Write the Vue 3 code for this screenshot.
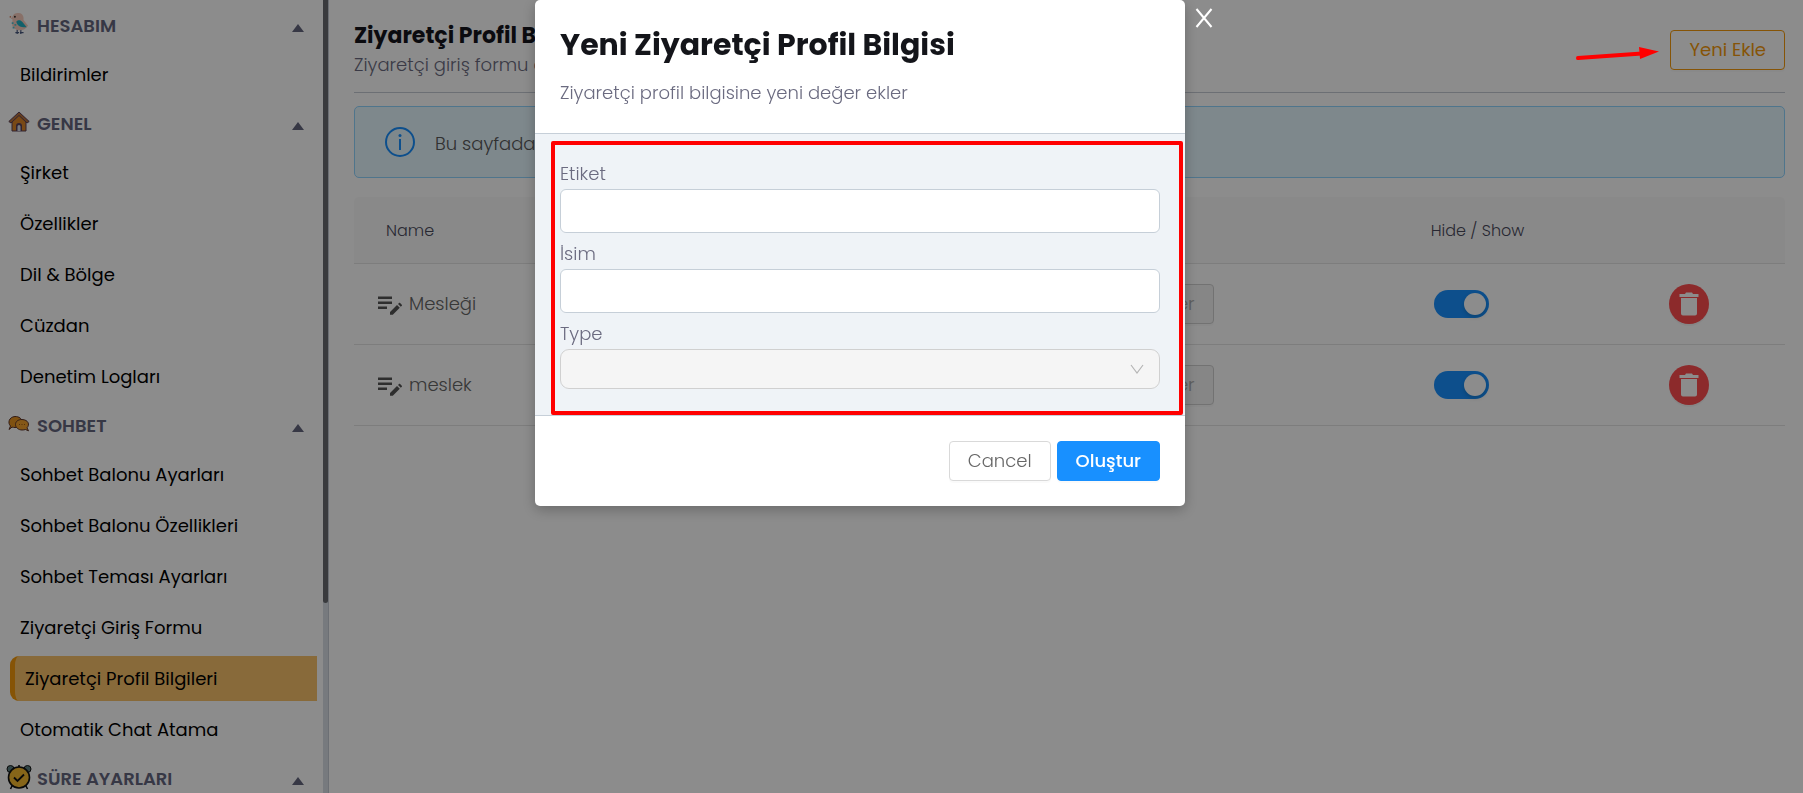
<template>
  <div class="page">
    <aside class="sidebar">
      <nav class="sidebar-nav">
        <section v-for="group in groups" :key="group.title" class="group">
          <button type="button" class="group-header">
            <span class="group-icon" aria-hidden="true">
              <svg v-if="group.icon === 'bird'" width="20" height="24" viewBox="0 0 22 26">
                <path d="M9 19v5M13 19v5M7 22.500h4M12 22.500h4" stroke="#4a5a80" stroke-width="1.300" fill="none" />
                <path d="M2 7 4 4.500C5 1.500 8 .5 11 1c4 .6 5.500 4 5 7.500l5 6.500-3 3c-2 2-8 3-12 0C2.500 15.500 3.500 11 4 8z" fill="#f7cdbd" />
                <path d="M2 6 0 5.200 2.500 4z" fill="#d8744f" />
                <path d="M8 10.500c2-2.500 5-2 6.500 0l5 6c-5 .5-10-.5-11.500-6z" fill="#22b1c4" />
                <path d="M3 11h2v2H3zM6 13h2v2H6zM4 16h2v2H4z" fill="#54c4d4" />
                <circle cx="6.500" cy="5" r="1" fill="#222" />
              </svg>
              <svg v-else-if="group.icon === 'house'" width="22" height="22" viewBox="0 0 22 22">
                <path d="M4 9v11h14V9l-7-6z" fill="#dd8629" stroke="#59405a" />
                <path d="M11 1 .8 10.500 3 12l8-7.500 8 7.500 2.200-1.500z" fill="#b7713b" stroke="#59405a" />
                <path d="M8 20v-5a3 3 0 0 1 6 0v5z" fill="#59405a" />
                <path d="M9.500 20v-4.500a1.500 1.500 0 0 1 3 0V20z" fill="#d8dbe6" />
              </svg>
              <svg v-else-if="group.icon === 'chat'" width="22" height="20" viewBox="0 0 22 18">
                <path d="M1 14.500 2.500 11C-.5 8 .8 2 7 1.500c4 0 7 2 7 5.500s-3 5.500-7 5.500c-1 0-2-.2-3-.4z" fill="#e89420" stroke="#59322a" />
                <path d="m20.500 15.800-1.500-3c3-3 1.500-8-5-8.300-4 0-6.500 2-6.500 5s3 5.500 6.500 5.500c1.500 0 2.500-.2 3.500-.5z" fill="#f3a02c" stroke="#59322a" />
                <path d="M11 9.500h1M13.500 9.500h1M16 9.500h1" stroke="#9b5b16" />
              </svg>
              <svg v-else width="26" height="26" viewBox="0 0 26 26">
                <circle cx="4.500" cy="5" r="3.500" fill="#5b7f80" stroke="#111" />
                <circle cx="21.500" cy="5" r="3.500" fill="#5b7f80" stroke="#111" />
                <path d="m6.500 21-2 4M19.500 21l2 4M13 1v2" stroke="#111" stroke-width="1.600" />
                <circle cx="13" cy="13.500" r="10.500" fill="#f5b92e" stroke="#111" stroke-width="1.600" />
                <path d="m8 13.500 3.500 3.500 6.500-6.500" fill="none" stroke="#111" stroke-width="1.800" />
              </svg>
            </span>
            <span class="group-title">{{ group.title }}</span>
            <span class="caret" aria-hidden="true"></span>
          </button>
          <a
            v-for="item in group.items"
            :key="item"
            href="#"
            class="nav-item"
            :class="{ active: item === activeItem }"
          >{{ item }}</a>
        </section>
      </nav>
      <div class="scroll-track"><div class="scroll-thumb"></div></div>
    </aside>

    <main class="content">
      <header class="page-header">
        <div>
          <h1 class="page-title">Ziyaretçi Profil Bilgileri</h1>
          <p class="page-subtitle">Ziyaretçi giriş formu alanları</p>
        </div>
        <button type="button" class="btn btn-add">Yeni Ekle</button>
      </header>

      <div class="alert">
        <svg width="32" height="32" viewBox="0 0 32 32" fill="none" stroke="#1890ff" aria-hidden="true">
          <circle cx="16" cy="16" r="14" stroke-width="2" />
          <path d="M16 13v11" stroke-width="2" />
          <circle cx="16" cy="9.500" r="1.500" fill="#1890ff" stroke="none" />
        </svg>
        <span class="alert-text">Bu sayfada</span>
      </div>

      <table class="table">
        <colgroup>
          <col class="col-name" />
          <col class="col-values" />
          <col class="col-toggle" />
          <col class="col-delete" />
        </colgroup>
        <thead>
          <tr>
            <th>Name</th>
            <th></th>
            <th>Hide / Show</th>
            <th></th>
          </tr>
        </thead>
        <tbody>
          <tr v-for="row in rows" :key="row.name">
            <td>
              <span class="name-cell">
                <svg width="24" height="22" viewBox="0 0 24 22" fill="#555" aria-hidden="true">
                  <path d="M0 3.500h14V6H0zM0 8.500h14V11H0zM0 13.500h9V16H0z" />
                  <path d="m12 19 7-7 2.800 2.800-7 7H12zM20 11l1-1c.3-.3.800-.3 1.100 0l1.700 1.700c.3.3.3.800 0 1.100l-1 1z" />
                </svg>
                {{ row.name }}
              </span>
            </td>
            <td class="values-cell"><button type="button" class="btn btn-values" disabled>Değerler</button></td>
            <td><input v-model="row.visible" type="checkbox" class="switch" :aria-label="row.name" /></td>
            <td>
              <button type="button" class="btn-delete" aria-label="Sil">
                <svg width="20" height="24" viewBox="0 0 20 24" fill="#fff" aria-hidden="true">
                  <path d="M.500 2H6l1-1.500h6L14 2h5.500v3H.500zM2 6h16v15.500a2 2 0 0 1-2 2H4a2 2 0 0 1-2-2z" />
                </svg>
              </button>
            </td>
          </tr>
        </tbody>
      </table>
    </main>

    <div class="overlay">
      <div class="modal" role="dialog" aria-labelledby="modal-title">
        <header class="modal-header">
          <h2 id="modal-title" class="modal-title">Yeni Ziyaretçi Profil Bilgisi</h2>
          <p class="modal-subtitle">Ziyaretçi profil bilgisine yeni değer ekler</p>
        </header>
        <form id="profile-form" class="modal-body" @submit.prevent>
          <label for="field-label">Etiket</label>
          <input id="field-label" v-model="form.label" type="text" class="field" />
          <label for="field-name">İsim</label>
          <input id="field-name" v-model="form.name" type="text" class="field" />
          <label for="field-type">Type</label>
          <div class="select-wrap">
            <select id="field-type" class="field-select" disabled></select>
            <svg class="chevron" width="14" height="10" viewBox="0 0 14 10" fill="none" stroke="#b5b5b5" aria-hidden="true">
              <path d="m1 1 6 8 6-8" stroke-width="1.200" />
            </svg>
          </div>
          <div class="highlight" aria-hidden="true"></div>
        </form>
        <footer class="modal-footer">
          <button type="button" class="btn btn-cancel">Cancel</button>
          <button type="submit" form="profile-form" class="btn btn-primary">Oluştur</button>
        </footer>
      </div>
      <button type="button" class="modal-close" aria-label="Kapat">
        <svg width="18" height="20" viewBox="0 0 18 20" fill="none" stroke="#fff" stroke-width="2">
          <path d="m1.500 1 15 18M16.500 1l-15 18" />
        </svg>
      </button>
    </div>

    <svg class="arrow" width="84" height="16" viewBox="0 0 84 16" aria-hidden="true">
      <path d="m3 11 64-4.500" stroke="#f00" stroke-width="4" stroke-linecap="round" />
      <path d="M64 0 84 4.500 65 12z" fill="#f00" />
    </svg>
  </div>
</template>

<script setup>
import { reactive, ref } from 'vue'

const activeItem = ref('Ziyaretçi Profil Bilgileri')

const groups = [
  { title: 'HESABIM', icon: 'bird', items: ['Bildirimler'] },
  {
    title: 'GENEL',
    icon: 'house',
    items: ['Şirket', 'Özellikler', 'Dil & Bölge', 'Cüzdan', 'Denetim Logları']
  },
  {
    title: 'SOHBET',
    icon: 'chat',
    items: [
      'Sohbet Balonu Ayarları',
      'Sohbet Balonu Özellikleri',
      'Sohbet Teması Ayarları',
      'Ziyaretçi Giriş Formu',
      'Ziyaretçi Profil Bilgileri',
      'Otomatik Chat Atama'
    ]
  },
  { title: 'SÜRE AYARLARI', icon: 'clock', items: [] }
]

const rows = reactive([
  { name: 'Mesleği', visible: true },
  { name: 'meslek', visible: true }
])

const form = reactive({ label: '', name: '' })
</script>

<style>
body {
  overflow: hidden;
}
</style>

<style scoped>
.page {
  display: flex;
  height: 100vh;
  overflow: hidden;
  background: #fff;
  color: #6b6b80;
  font-family: Poppins, Inter, sans-serif;
  font-size: 18px;
  font-weight: 300;
  line-height: 24px;
}

.page *,
.page *::before {
  box-sizing: border-box;
}

button,
input,
select {
  font: inherit;
}

/* Sidebar */
.sidebar {
  display: flex;
  flex: 0 0 329px;
  border-right: 1px solid #c5cad3;
}

.sidebar-nav {
  flex: 1;
  min-width: 0;
  padding: 3px 6px 0 6px;
}

.group {
  display: flex;
  flex-direction: column;
  margin-bottom: 1px;
}

.group-header {
  display: flex;
  align-items: center;
  width: 100%;
  height: 46px;
  padding: 0 13px 0 0;
  border: 0;
  background: none;
  color: #64667f;
  font-weight: 600;
  text-align: left;
}

.group-icon {
  display: flex;
  flex: 0 0 26px;
  justify-content: center;
  margin: 0 5px 4px 0;
}

.group-title {
  flex: 1;
}

.caret {
  margin-top: 4px;
  border: 6px solid transparent;
  border-top: 0;
  border-bottom: 8px solid #64667f;
}

.nav-item {
  height: 45px;
  margin: 3px 0 3px 4px;
  padding: 0 10px;
  color: #000;
  font-weight: 400;
  line-height: 45px;
  text-decoration: none;
}

.nav-item.active {
  border-left: 5px solid #f59a0c;
  border-radius: 9px 0 0 9px;
  background: #f7c16b;
}

.scroll-track {
  width: 5px;
  background: #d9dee6;
}

.scroll-thumb {
  height: 76%;
  border-radius: 0 0 3px 3px;
  background: #686b70;
}

/* Page content */
.content {
  flex: 1;
  min-width: 0;
  padding: 0 18px 0 25px;
}

.page-header {
  display: flex;
  align-items: center;
  justify-content: space-between;
  padding: 22px 0 15px;
  border-bottom: 1px solid #c5cad3;
}

.page-title {
  margin: 0 0 3px;
  color: #15151c;
  font-size: 22px;
  font-weight: 700;
  line-height: 28px;
}

.page-subtitle {
  margin: 0;
}

.btn {
  height: 40px;
  padding: 0 18px;
  border: 1px solid #d9d9d9;
  border-radius: 4px;
  background: #fff;
  color: #666;
  box-shadow: 0 2px 0 rgba(0, 0, 0, 0.02);
}

.btn-add {
  border-color: #f59a0c;
  color: #f59a0c;
  font-weight: 400;
}

.alert {
  display: flex;
  align-items: center;
  gap: 19px;
  height: 72px;
  margin: 13px 0 19px;
  padding: 0 29px;
  border: 1px solid #91d5ff;
  border-radius: 5px;
  background: #e6f7ff;
  color: #595959;
}

.alert-text {
  padding-top: 3px;
}

.table {
  width: 100%;
  border-collapse: separate;
  border-spacing: 0;
  table-layout: fixed;
}

.col-name { width: 30%; }
.col-values { width: 43%; }
.col-toggle { width: 16%; }
.col-delete { width: 11%; }

.table th {
  height: 67px;
  padding: 2px 32px 0;
  border-bottom: 1px solid #e3e3e3;
  background: #fafafa;
  color: #4a4a5c;
  font-size: 16px;
  font-weight: 300;
  text-align: left;
}

.table th:first-child { border-radius: 5px 0 0 0; }
.table th:last-child { border-radius: 0 5px 0 0; }

.table td {
  height: 81px;
  padding: 0 24px;
  border-bottom: 1px solid #e3e3e3;
  color: #666;
}

.table td:nth-child(3) {
  padding-left: 35px;
}

.name-cell {
  display: flex;
  align-items: center;
  gap: 7px;
}

.table .values-cell {
  padding-right: 185px;
  text-align: right;
}

.btn-values {
  border-color: #d0d0d0;
  background: #f5f5f5;
  color: #aaa;
}

.switch {
  display: block;
  width: 55px;
  height: 28px;
  margin: 0;
  padding: 3px;
  border-radius: 14px;
  appearance: none;
  background: #bfbfbf;
}

.switch::before {
  content: '';
  display: block;
  width: 22px;
  height: 22px;
  border-radius: 50%;
  background: #fff;
  box-shadow: 0 2px 4px rgba(0, 35, 11, 0.2);
}

.switch:checked {
  background: #1890ff;
}

.switch:checked::before {
  margin-left: auto;
}

.btn-delete {
  display: flex;
  align-items: center;
  justify-content: center;
  width: 40px;
  height: 40px;
  margin-left: 17px;
  padding: 0;
  border: 0;
  border-radius: 50%;
  background: #ff4d4f;
  box-shadow: 0 2px 0 rgba(0, 0, 0, 0.04);
}

/* Modal */
.overlay {
  position: fixed;
  inset: 0;
  display: flex;
  align-items: flex-start;
  justify-content: center;
  background: rgba(0, 0, 0, 0.45);
}

.modal {
  width: 650px;
  overflow: hidden;
  border-radius: 5px;
  background: #fff;
  box-shadow: 0 4px 14px rgba(0, 0, 0, 0.25);
}

.modal-header {
  padding: 25px 25px 28px;
  border-bottom: 1px solid #c6cfd8;
}

.modal-title {
  margin: 0 0 16px;
  color: #14151a;
  font-size: 30px;
  font-weight: 700;
  line-height: 40px;
}

.modal-subtitle {
  margin: 0;
}

.modal-body {
  position: relative;
  padding: 28px 25px 26px;
  background: #eff3f7;
}

.modal-body label {
  display: block;
  margin-bottom: 3px;
}

.field {
  display: block;
  width: 100%;
  height: 44px;
  margin-bottom: 9px;
  padding: 0 12px;
  border: 1px solid #c6cfd8;
  border-radius: 6px;
  background: #fff;
}

.select-wrap {
  position: relative;
}

.field-select {
  display: block;
  width: 100%;
  height: 40px;
  padding: 0 12px;
  border: 1px solid #d0d0d0;
  border-radius: 9px;
  appearance: none;
  background: #f5f5f5;
  opacity: 1;
}

.chevron {
  position: absolute;
  top: 15px;
  right: 16px;
}

.highlight {
  position: absolute;
  inset: 7px 2px 0 16px;
  border: 4px solid #f00;
  border-radius: 2px;
  pointer-events: none;
}

.modal-footer {
  display: flex;
  justify-content: flex-end;
  gap: 6px;
  padding: 25px;
  border-top: 1px solid #c6cfd8;
}

.btn-primary {
  border-color: #1890ff;
  background: #1890ff;
  color: #fff;
  font-weight: 500;
}

.modal-close {
  flex: 0 0 83px;
  padding: 8px 0 0 10px;
  border: 0;
  background: none;
  line-height: 0;
  text-align: left;
}

.arrow {
  position: fixed;
  top: 47px;
  right: 144px;
}
</style>
